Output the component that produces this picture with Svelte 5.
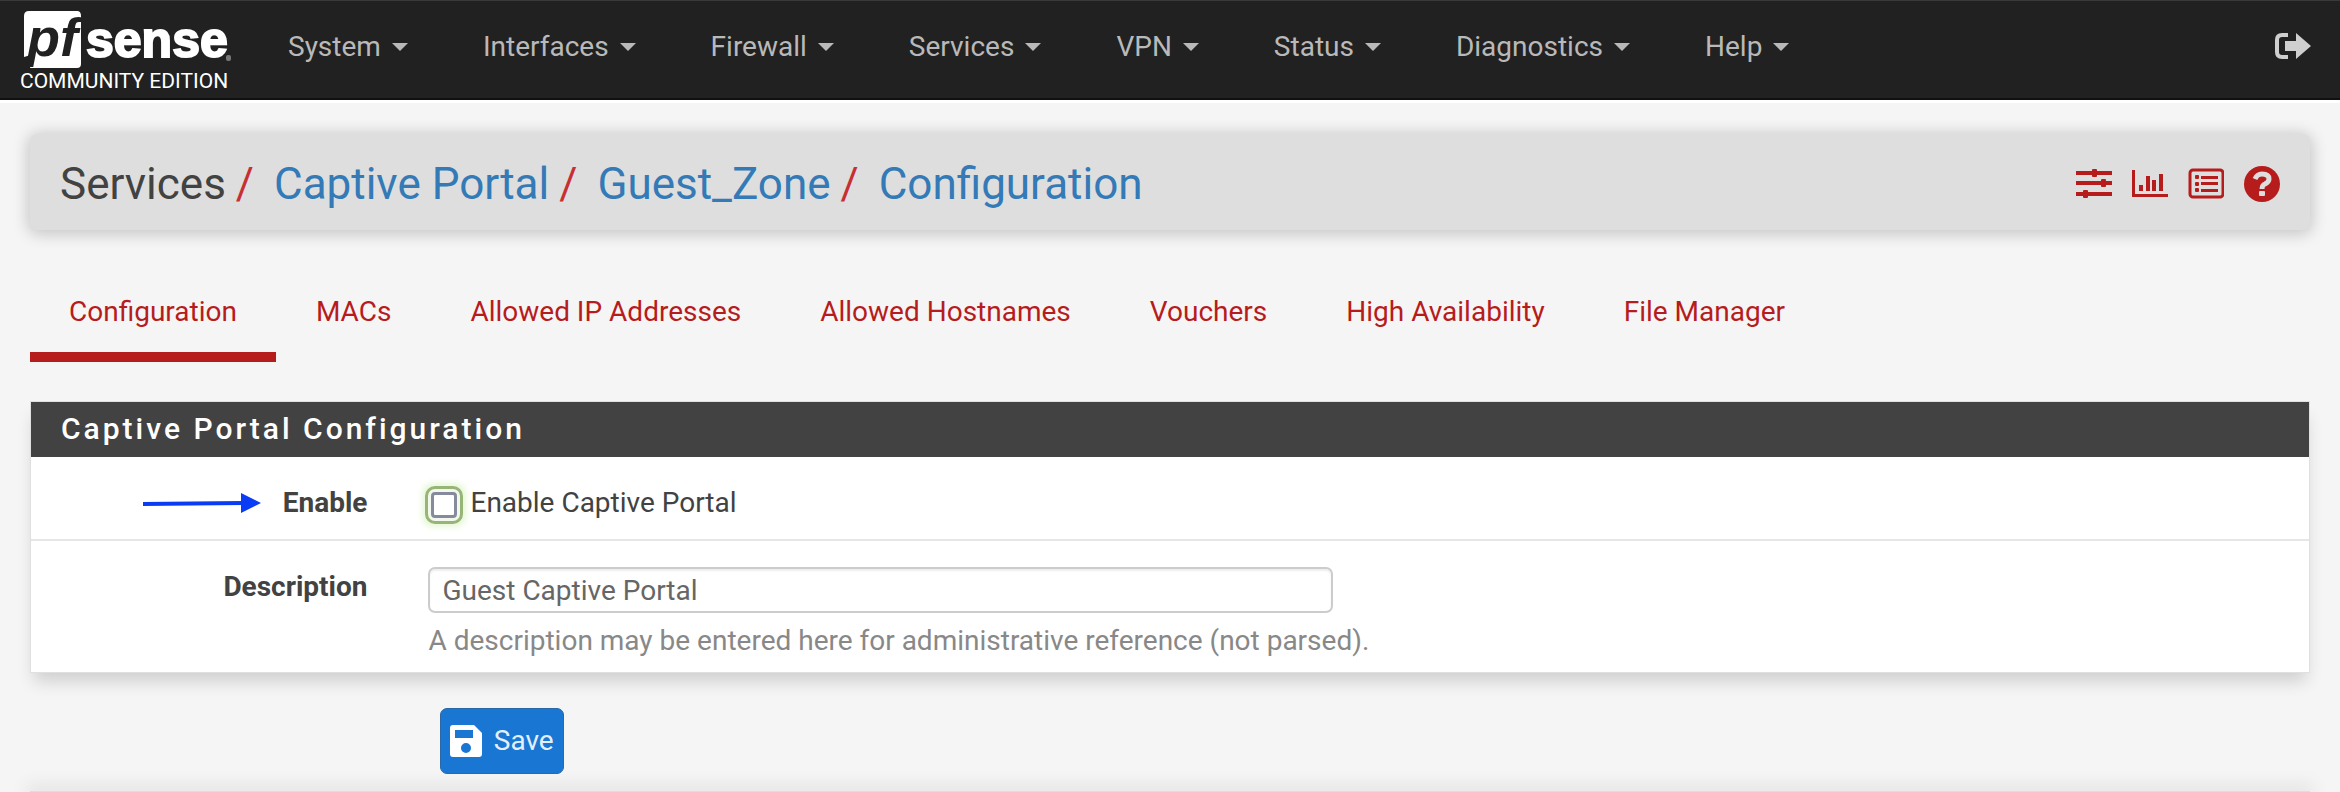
<script lang="ts">
  const menus = [
    "System",
    "Interfaces",
    "Firewall",
    "Services",
    "VPN",
    "Status",
    "Diagnostics",
    "Help",
  ];

  const crumbs = ["Captive Portal", "Guest_Zone", "Configuration"];

  const tabs = [
    "Configuration",
    "MACs",
    "Allowed IP Addresses",
    "Allowed Hostnames",
    "Vouchers",
    "High Availability",
    "File Manager",
  ];

  let activeTab = $state("Configuration");
  let enabled = $state(false);
  let description = $state("Guest Captive Portal");

  function selectTab(event: MouseEvent, tab: string) {
    event.preventDefault();
    activeTab = tab;
  }
</script>

<nav class="navbar">
  <a class="brand" href="#home" aria-label="pfSense Community Edition">
    <svg class="logo" viewBox="0 -4 212 64" aria-hidden="true">
      <path
        d="M5 0H53Q57 0 57 5V53Q57 57 53 57H6L10 43 0 46V5Q0 0 5 0Z"
        fill="#fff"
      />
      <text x="3" y="45" class="pf">pf</text>
      <text x="62" y="46" class="sense">sense</text>
      <rect x="202" y="44" width="5" height="6" rx="2" fill="#777" />
    </svg>
    <span class="edition">COMMUNITY EDITION</span>
  </a>

  <div class="menus">
    {#each menus as menu}
      <button type="button" class="menu">
        {menu}
        <svg class="caret" viewBox="0 0 16 8" aria-hidden="true">
          <path d="M0 0H16L8 8Z" fill="currentColor" />
        </svg>
      </button>
    {/each}
  </div>

  <a class="logout" href="#logout" aria-label="Log out">
    <svg viewBox="0 0 38 28" aria-hidden="true">
      <path
        d="M14 3H8Q3 3 3 8V20Q3 25 8 25H14"
        fill="none"
        stroke="currentColor"
        stroke-width="4"
      />
      <path d="M11 9H22V1L37 14L22 27V19H11Z" fill="currentColor" />
    </svg>
  </a>
</nav>

<main>
  <header class="page-header">
    <ol class="breadcrumb">
      <li>Services</li>
      {#each crumbs as crumb}
        <li><span class="slash">/</span><a href="#{crumb}">{crumb}</a></li>
      {/each}
    </ol>

    <div class="shortcuts">
      <a href="#settings" aria-label="Related settings">
        <svg viewBox="0 0 36 36" aria-hidden="true">
          <g fill="currentColor">
            <rect x="0" y="5" width="36" height="4" />
            <rect x="0" y="15" width="36" height="4" />
            <rect x="0" y="26" width="36" height="4" />
            <rect x="16" y="3" width="5" height="8" rx="1" />
            <rect x="25" y="13" width="5" height="8" rx="1" />
            <rect x="7" y="24" width="5" height="8" rx="1" />
          </g>
        </svg>
      </a>
      <a href="#status" aria-label="Related status">
        <svg viewBox="0 0 36 36" aria-hidden="true">
          <g fill="currentColor">
            <path d="M0 4H3V28H36V31H0Z" />
            <rect x="7" y="19" width="4" height="6" />
            <rect x="14" y="10" width="4" height="15" />
            <rect x="20" y="14" width="4" height="11" />
            <rect x="27" y="8" width="4" height="17" />
          </g>
        </svg>
      </a>
      <a href="#logs" aria-label="Related log entries">
        <svg viewBox="0 0 36 36" aria-hidden="true">
          <rect
            x="2"
            y="4"
            width="33"
            height="27"
            rx="3"
            fill="none"
            stroke="currentColor"
            stroke-width="3"
          />
          <g fill="currentColor">
            <rect x="7" y="9" width="4" height="4" rx="1" />
            <rect x="7" y="16" width="4" height="4" rx="1" />
            <rect x="7" y="22" width="4" height="4" rx="1" />
            <rect x="13" y="10" width="17" height="3" />
            <rect x="13" y="16" width="17" height="3" />
            <rect x="13" y="23" width="17" height="3" />
          </g>
        </svg>
      </a>
      <a href="#help" aria-label="Help for this page">
        <svg viewBox="0 0 36 36" aria-hidden="true">
          <circle cx="18" cy="18" r="18" fill="currentColor" />
          <path
            d="M11 13Q13 8 18 8Q25 8 25 13Q25 16 21 18Q18 19 18 23"
            fill="none"
            stroke="#dedede"
            stroke-width="5"
          />
          <rect x="15" y="25" width="6" height="5" rx="1" fill="#dedede" />
        </svg>
      </a>
    </div>
  </header>

  <div class="tabs">
    {#each tabs as tab}
      <a
        href="#{tab}"
        class="tab"
        class:active={activeTab === tab}
        onclick={(e) => selectTab(e, tab)}>{tab}</a
      >
    {/each}
  </div>

  <form onsubmit={(e) => e.preventDefault()}>
    <section class="panel">
      <h2>Captive Portal Configuration</h2>

      <div class="row">
        <div class="name">
          <svg class="arrow" viewBox="0 0 118 20" aria-hidden="true">
            <path d="M0 11L100 10" stroke="#0b3cf5" stroke-width="4" />
            <path d="M98 0L118 10L98 20Z" fill="#0b3cf5" />
          </svg>
          <label for="enable">Enable</label>
        </div>
        <div class="field">
          <label class="check">
            <input id="enable" type="checkbox" bind:checked={enabled} />
            Enable Captive Portal
          </label>
        </div>
      </div>

      <div class="row">
        <div class="name"><label for="descr">Description</label></div>
        <div class="field">
          <input id="descr" type="text" bind:value={description} />
        </div>
        <p class="help">
          A description may be entered here for administrative reference (not
          parsed).
        </p>
      </div>
    </section>

    <div class="actions">
      <button type="submit" class="save">
        <svg viewBox="0 0 32 32" aria-hidden="true">
          <path
            fill="#fff"
            fill-rule="evenodd"
            d="M3 0H24L32 8V29Q32 32 29 32H3Q0 32 0 29V3Q0 0 3 0ZM5 5V13H23V5ZM16 18A5 5 0 1 0 16 28A5 5 0 1 0 16 18Z"
          />
        </svg>
        Save
      </button>
    </div>
  </form>
</main>

<footer></footer>

<style>
  :global(body) {
    margin: 0;
    background: #f5f5f5;
    color: #424242;
    font:
      28px/40px Roboto,
      sans-serif;
  }

  a {
    color: #337ab7;
    text-decoration: none;
  }

  button,
  input {
    font: inherit;
  }

  svg {
    display: block;
    flex: none;
  }

  .navbar {
    display: flex;
    align-items: center;
    height: 100px;
    padding: 0 28px 0 20px;
    box-sizing: border-box;
    background: #212121;
    border-top: 1px solid #3a3a3a;
    border-bottom: 2px solid #111;
    box-shadow: 0 3px 0 #fff;
  }

  .brand {
    width: 230px;
    padding-bottom: 2px;
    color: #fff;
  }

  .logo {
    width: 212px;
    height: 64px;
    margin-left: 4px;
    overflow: visible;
  }

  .pf,
  .sense {
    font-family: "Liberation Sans", Arial, sans-serif;
    font-weight: 700;
  }

  .pf {
    font-size: 54px;
    font-style: italic;
    fill: #212121;
  }

  .sense {
    font-size: 50px;
    fill: #fff;
    stroke: #fff;
    stroke-width: 2px;
  }

  .edition {
    display: block;
    font-size: 21px;
    line-height: 20px;
    white-space: nowrap;
  }

  .menus {
    display: flex;
    flex: 1;
  }

  .menu {
    display: flex;
    align-items: center;
    gap: 11px;
    padding: 0 37px 6px 38px;
    border: 0;
    background: none;
    color: #b9b9b9;
  }

  .caret {
    width: 16px;
    height: 8px;
  }

  .logout {
    padding-bottom: 8px;
    color: #cfcfcf;
  }

  .logout svg {
    width: 38px;
    height: 28px;
  }

  main {
    padding: 34px 30px 0;
  }

  .page-header {
    display: flex;
    align-items: center;
    justify-content: space-between;
    padding: 20px 30px 16px;
    border-radius: 8px;
    background: #dedede;
    box-shadow: 0 2px 16px 2px rgba(0, 0, 0, 0.2);
  }

  .breadcrumb {
    display: flex;
    margin: 0;
    padding: 0;
    list-style: none;
    font-size: 44px;
    line-height: 60px;
  }

  .slash {
    padding: 0 20px 0 10px;
    color: #c62f33;
  }

  .shortcuts {
    display: flex;
    gap: 20px;
  }

  .shortcuts a {
    color: #b71c1c;
  }

  .shortcuts svg {
    width: 36px;
    height: 36px;
  }

  .tabs {
    display: flex;
    gap: 1px;
    margin-top: 62px;
  }

  .tab {
    padding: 0 39px 20px;
    border-bottom: 10px solid transparent;
    color: #b71c1c;
  }

  .tab.active {
    border-color: #b71c1c;
  }

  .panel {
    margin-top: 39px;
    border: 1px solid #e0e0e0;
    background: #fff;
    box-shadow: 0 12px 16px -4px rgba(0, 0, 0, 0.16);
  }

  h2 {
    margin: 0;
    padding: 7px 30px 8px;
    background: #424242;
    color: #fff;
    font-weight: 500;
    font-size: 30px;
    line-height: 40px;
    letter-spacing: 3px;
  }

  .row,
  .actions {
    display: grid;
    grid-template-columns: 16fr 42fr 42fr;
  }

  .row {
    padding: 26px 0 16px;
  }

  .row + .row {
    padding: 26px 0 11px;
    border-top: 2px solid #e6e6e6;
  }

  .name {
    display: flex;
    justify-content: flex-end;
    align-items: flex-start;
    gap: 22px;
    padding-right: 28px;
    font-weight: 700;
  }

  .arrow {
    width: 118px;
    height: 20px;
    margin-top: 10px;
  }

  .field,
  .help {
    padding: 0 19px 0 33px;
  }

  .check {
    display: flex;
    align-items: center;
    gap: 13px;
  }

  input[type="checkbox"] {
    appearance: none;
    width: 26px;
    height: 26px;
    margin: 4px 0 0 3px;
    border: 3px solid #858a9c;
    border-radius: 4px;
    background: #fff;
    outline: 3px solid #96b577;
    outline-offset: 3px;
    box-shadow:
      0 0 0 4px #f3f8ee,
      0 0 6px 9px #e6f7d6;
  }

  input[type="checkbox"]:checked {
    background: #1976d2;
  }

  input[type="text"] {
    display: block;
    width: 100%;
    height: 46px;
    padding: 0 12px;
    box-sizing: border-box;
    border: 2px solid #ccc;
    border-radius: 7px;
    background: #fff;
    box-shadow: inset 0 2px 2px rgba(0, 0, 0, 0.07);
    color: #666;
  }

  .help {
    grid-column: 2 / -1;
    margin: 8px 0 0;
    color: #888;
  }

  .actions {
    margin-top: 35px;
  }

  .save {
    grid-column: 2;
    justify-self: start;
    display: flex;
    align-items: center;
    gap: 12px;
    height: 66px;
    margin-left: 45px;
    padding: 0 9px;
    border: 1px solid #2b68a8;
    border-radius: 7px;
    background: #1976d2;
    color: #e3f0fc;
  }

  .save svg {
    width: 32px;
    height: 32px;
  }

  footer {
    height: 1px;
    margin: 17px 30px 0;
    background: #dedede;
    box-shadow: 0 0 18px 4px rgba(0, 0, 0, 0.12);
  }
</style>
